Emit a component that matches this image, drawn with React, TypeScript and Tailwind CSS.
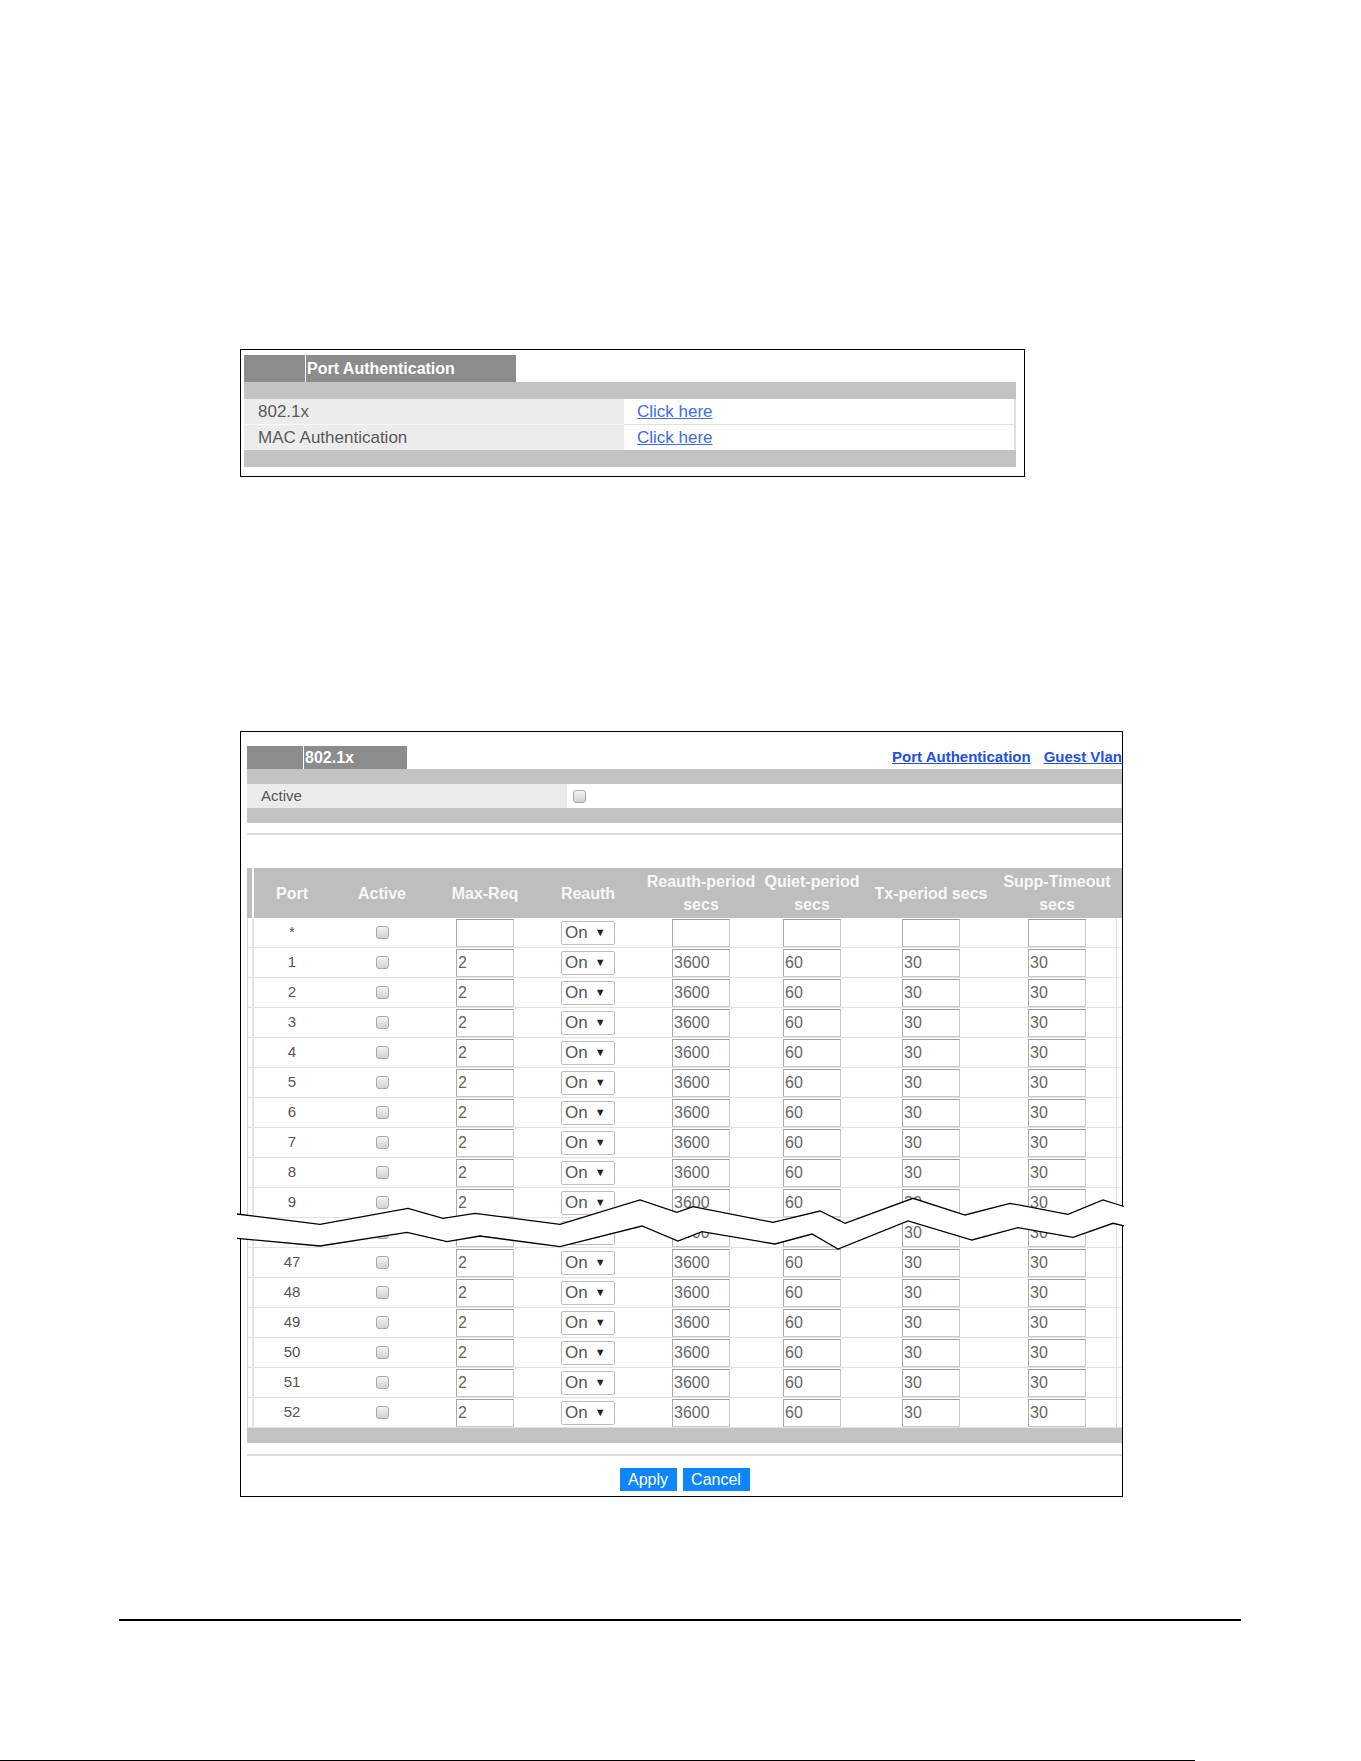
import React from "react";

const COLS =
  "grid grid-cols-[76px_104px_102px_104px_122px_100px_138px_114px]";

type Row = { port: string; maxReq: string; reauth: string; quiet: string; tx: string; supp: string };

const ports = ["*", "1", "2", "3", "4", "5", "6", "7", "8", "9", "46", "47", "48", "49", "50", "51", "52"];

const rows: Row[] = ports.map((p) =>
  p === "*"
    ? { port: p, maxReq: "", reauth: "", quiet: "", tx: "", supp: "" }
    : { port: p, maxReq: "2", reauth: "3600", quiet: "60", tx: "30", supp: "30" }
);

function CheckBox() {
  return (
    <span className="block w-[13px] h-[13px] rounded-[3px] border border-[#a9a9a9] bg-linear-to-b from-[#f3f3f3] to-[#d2d2d2]" />
  );
}

function Field({ value }: { value: string }) {
  return (
    <input
      readOnly
      defaultValue={value}
      className="w-[58px] h-[28px] border border-[#c8c8c8] border-t-[#9c9c9c] border-l-[#ababab] bg-white px-[1px] text-[16px] text-[#666] outline-none"
    />
  );
}

function OnSelect() {
  return (
    <div className="flex items-center w-[54px] h-[24px] rounded-[2px] border border-[#bdbdbd] bg-white pl-[3px]">
      <span className="text-[17px] leading-none text-[#555]">On</span>
      <span className="ml-[7px] text-[11px] leading-none text-[#222]">▼</span>
    </div>
  );
}

function TabTitle({ label, lead, width, height }: { label: string; lead: string; width: string; height: string }) {
  return (
    <div className={`flex ${width} ${height} bg-[#8c8c8c]`}>
      <div className={lead} />
      <div className="w-px bg-white" />
      <div className="flex items-center pl-[1px] text-[16px] font-bold text-white">{label}</div>
    </div>
  );
}

export default function App() {
  const upper =
    "237,1214 320,1224.3 408,1208.3 443,1218.3 475,1213.3 560,1224.3 640,1200 677,1212.3 693,1206.7 773,1222.3 820,1211 845,1223.3 913,1198.3 965,1215 1010,1203.3 1068,1214.3 1103,1200 1124,1206.5";
  const lower =
    "237,1238.3 320,1246 407,1232.3 447,1241.7 480,1236 560,1246.7 642,1226 678,1241 702,1231.7 775,1244 812,1234 838,1249 908,1221 972,1240 1018,1227.7 1073,1237.3 1113,1223.3 1124,1225.8";
  const band = upper + " " + lower.split(" ").reverse().join(" ");

  return (
    <div className="relative w-[1361px] h-[1761px] bg-white font-['Liberation_Sans',Arial,sans-serif] flex flex-col">
      {/* Port Authentication panel */}
      <div className="ml-[240px] mt-[349px] w-[785px] h-[128px] border border-black pl-[3px] pt-[5px]">
        <TabTitle label="Port Authentication" lead="w-[61px]" width="w-[272px]" height="h-[27px]" />
        <div className="w-[772px]">
          <div className="h-[17px] bg-[#c3c3c3]" />
          <div className="flex h-[26px]">
            <div className="w-[380px] flex items-center pl-[14px] bg-[#ececec] border-b border-[#f7f7f7] text-[17px] text-[#5a5a5a]">
              802.1x
            </div>
            <div className="flex-1 flex items-center pl-[13px] bg-white border-b border-r-2 border-[#e0e0e0]">
              <a className="text-[17px] text-[#3d6cf0] underline cursor-pointer">Click here</a>
            </div>
          </div>
          <div className="flex h-[25px]">
            <div className="w-[380px] flex items-center pl-[14px] bg-[#ececec] text-[17px] text-[#5a5a5a]">
              MAC Authentication
            </div>
            <div className="flex-1 flex items-center pl-[13px] bg-white border-r-2 border-[#e0e0e0]">
              <a className="text-[17px] text-[#3d6cf0] underline cursor-pointer">Click here</a>
            </div>
          </div>
          <div className="h-[17px] bg-[#c3c3c3]" />
        </div>
      </div>

      {/* 802.1x panel */}
      <div className="ml-[240px] mt-[254px] w-[883px] h-[766px] border border-black pl-[6px] pt-[14px] overflow-hidden">
        <div className="w-[875px] flex flex-col">
          <div className="flex h-[23px]">
            <TabTitle label="802.1x" lead="w-[56px]" width="w-[160px]" height="h-[23px]" />
            <div className="ml-auto flex items-center gap-[13px] whitespace-nowrap text-[15px] font-bold text-[#2150e6]">
              <a className="underline cursor-pointer">Port Authentication</a>
              <a className="underline cursor-pointer">Guest Vlan</a>
            </div>
          </div>
          <div className="h-[15px] bg-[#c3c3c3]" />
          <div className="flex h-[24px]">
            <div className="w-[320px] flex items-center pl-[14px] bg-[#ebebeb] text-[15px] text-[#555]">Active</div>
            <div className="flex-1 flex items-center pl-[6px] bg-white border-r border-[#e0e0e0]">
              <CheckBox />
            </div>
          </div>
          <div className="h-[15px] bg-[#c3c3c3]" />
          <div className="h-[10px]" />
          <div className="h-[2px] bg-[#dcdcdc]" />
          <div className="h-[33px]" />

          {/* port table header */}
          <div className="flex h-[50px] bg-[#bebebe]">
            <div className="w-[5px]" />
            <div className={`${COLS} border-l-2 border-white text-[16px] font-bold text-[#f7f7f7] leading-[23px] whitespace-nowrap`}>
              <div className="flex items-center justify-center">Port</div>
              <div className="flex items-center justify-center">Active</div>
              <div className="flex items-center justify-center">Max-Req</div>
              <div className="flex items-center justify-center">Reauth</div>
              <div className="flex flex-col items-center justify-center">
                <span>Reauth-period</span>
                <span>secs</span>
              </div>
              <div className="flex flex-col items-center justify-center">
                <span>Quiet-period</span>
                <span>secs</span>
              </div>
              <div className="flex items-center justify-center">Tx-period secs</div>
              <div className="flex flex-col items-center justify-center">
                <span>Supp-Timeout</span>
                <span>secs</span>
              </div>
            </div>
          </div>

          {/* port rows */}
          {rows.map((r) => (
            <div key={r.port} className="flex h-[30px] border-b border-[#e2e2e2]">
              <div className="w-[5px] border-l border-[#d4d4d4]" />
              <div className={`${COLS} border-l-2 border-[#e4e4e4]`}>
                <div className="flex items-center justify-center text-[15px] text-[#555]">{r.port}</div>
                <div className="flex items-center justify-center">
                  <CheckBox />
                </div>
                <div className="flex items-center justify-center">
                  <Field value={r.maxReq} />
                </div>
                <div className="flex items-center justify-center">
                  <OnSelect />
                </div>
                <div className="flex items-center justify-center">
                  <Field value={r.reauth} />
                </div>
                <div className="flex items-center justify-center">
                  <Field value={r.quiet} />
                </div>
                <div className="flex items-center justify-center">
                  <Field value={r.tx} />
                </div>
                <div className="flex items-center justify-center">
                  <Field value={r.supp} />
                </div>
              </div>
              <div className="w-[2px]" />
              <div className="w-px bg-[#dcdcdc]" />
            </div>
          ))}

          <div className="h-[15px] bg-[#c3c3c3]" />
          <div className="h-[11px]" />
          <div className="h-[2px] bg-[#dcdcdc]" />
          <div className="h-[12px]" />
          <div className="flex justify-center gap-[6px] h-[23px]">
            <button className="w-[57px] h-[23px] bg-[#0d86fc] text-white text-[16px]">Apply</button>
            <button className="w-[67px] h-[23px] bg-[#0d86fc] text-white text-[16px]">Cancel</button>
          </div>
        </div>
      </div>

      {/* page rule */}
      <div className="ml-[119px] mt-[122px] w-[1122px] h-[2px] bg-black" />
      <div className="mt-[139px] flex h-px">
        <div className="w-[1195px] bg-black" />
      </div>

      {/* torn-table break mark drawn over the rows */}
      <svg
        className="absolute left-[230px] top-[1190px]"
        width={900}
        height={70}
        viewBox="230 1190 900 70"
      >
        <polygon points={band} fill="white" />
        <polyline points={upper} fill="none" stroke="black" strokeWidth={1.3} />
        <polyline points={lower} fill="none" stroke="black" strokeWidth={1.3} />
      </svg>
    </div>
  );
}
